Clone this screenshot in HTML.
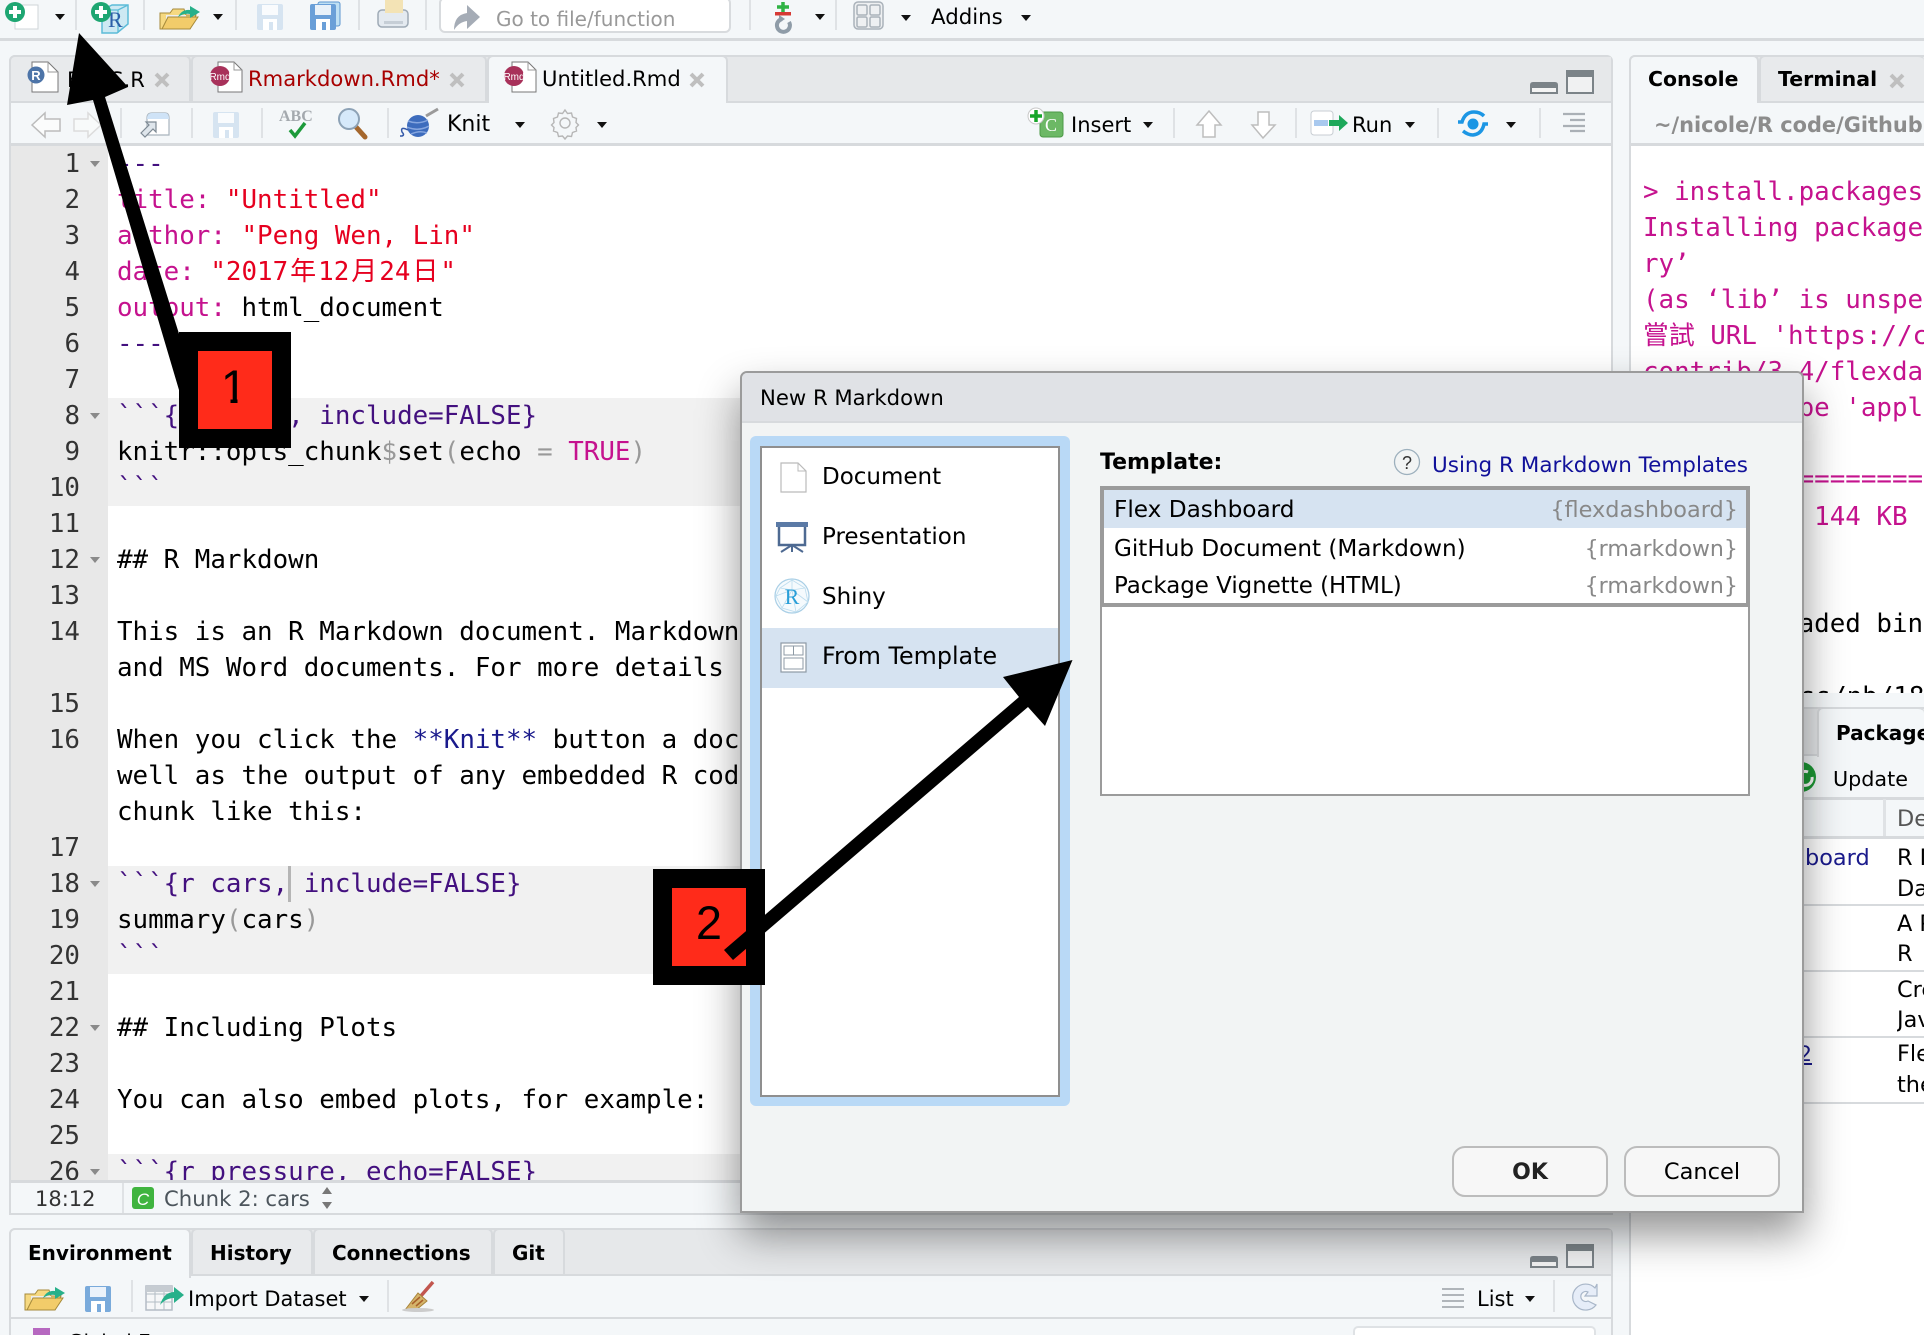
<!DOCTYPE html>
<html><head><meta charset="utf-8"><title>RStudio - New R Markdown</title>
<style>
html,body{margin:0;padding:0;width:1924px;height:1335px;overflow:hidden;background:#f4f7f9}
body{position:relative;font-family:"DejaVu Sans","Liberation Sans",sans-serif;font-size:21.3px;color:#000}
.a{position:absolute}
.t{position:absolute;white-space:pre;line-height:36px;margin-top:-17px}
.b{font-weight:bold;font-size:20px}
.m{font-family:"DejaVu Sans Mono","Liberation Mono","Noto Sans CJK TC",monospace;font-size:25.85px}
.n{color:#333;text-align:right;width:60px;left:20px}
.k{color:#c5128e}.s{color:#e6001f}.p{color:#43107f}.g{color:#999}.v{color:#1a1a8c}
.c{display:inline-block;width:30px;height:30px;line-height:30px;text-align:center;font-style:normal;font-family:"Noto Sans CJK TC",sans-serif;font-size:26px}
.tab{position:absolute;background:#e8eaec;border:2px solid #d7dadd;border-bottom:0;border-radius:6px 6px 0 0;box-sizing:border-box}
.on{background:#f4f7f9}
.bar{position:absolute;height:2px;background:#d7dadd}
.sep{position:absolute;width:2px;background:#dfe2e5}
.w{width:281px;overflow:hidden;height:40px;line-height:36px;margin-top:-17px}
.z{width:27px;overflow:hidden}
#dlg{position:absolute;left:740px;top:371px;width:1064px;height:842px;box-sizing:border-box;background:#f2f4f4;border:2px solid #9b9b9b;border-radius:7px 7px 0 0;box-shadow:0 22px 42px rgba(0,0,0,.42);z-index:5}
#ov{position:absolute;left:0;top:0;z-index:6}
</style></head><body>

<!-- main toolbar -->
<div class="bar" style="left:0;top:38px;width:1924px;height:3px"></div>
<div class="a" style="left:439px;top:-3px;width:292px;height:36px;box-sizing:border-box;background:#fff;border:2px solid #d8dbde;border-radius:6px"></div>
<div class="sep" style="left:75px;top:0;height:30px"></div><div class="sep" style="left:143px;top:0;height:30px"></div><div class="sep" style="left:235px;top:0;height:30px"></div><div class="sep" style="left:358px;top:0;height:30px"></div><div class="sep" style="left:425px;top:0;height:30px"></div><div class="sep" style="left:749px;top:0;height:30px"></div><div class="sep" style="left:835px;top:0;height:30px"></div>
<div class="t" style="left:496px;top:18px;color:#999;font-size:20px">Go to file/function</div>
<div class="t" style="left:931px;top:17px">Addins</div>

<!-- editor pane -->
<div class="a" style="left:9px;top:55px;width:1604px;height:1160px;box-sizing:border-box;border:2px solid #d7dadd;border-radius:6px 6px 0 0;background:#fff"></div>
<div class="a" style="left:11px;top:57px;width:1600px;height:45px;background:#e6e8ea"></div>
<div class="tab" style="left:9px;top:55px;width:182px;height:47px"></div>
<div class="tab" style="left:191px;top:55px;width:296px;height:47px"></div>
<div class="tab on" style="left:487px;top:55px;width:241px;height:50px"></div>
<div class="bar" style="left:9px;top:101px;width:478px"></div><div class="bar" style="left:727px;top:101px;width:886px"></div>
<div class="t" style="left:67px;top:79px;font-size:21px">FILES.R</div>
<div class="t" style="left:248px;top:78px;color:#a80000;font-size:21.1px">Rmarkdown.Rmd*</div>
<div class="t" style="left:542px;top:78px;font-size:21.1px">Untitled.Rmd</div>
<div class="a" style="left:11px;top:103px;width:1600px;height:41px;background:#f4f7f9"></div>
<div class="bar" style="left:9px;top:143px;width:1604px;height:3px"></div>
<div class="sep" style="left:120px;top:108px;height:30px"></div><div class="sep" style="left:191px;top:108px;height:30px"></div><div class="sep" style="left:261px;top:108px;height:30px"></div><div class="sep" style="left:387px;top:108px;height:30px"></div><div class="sep" style="left:1173px;top:108px;height:30px"></div><div class="sep" style="left:1295px;top:108px;height:30px"></div><div class="sep" style="left:1437px;top:108px;height:30px"></div><div class="sep" style="left:1539px;top:108px;height:30px"></div>
<div class="t" style="left:447px;top:124px;font-size:22px">Knit</div>
<div class="t" style="left:1071px;top:124px;font-size:21px">Insert</div>
<div class="t" style="left:1352px;top:124px;font-size:21px">Run</div>

<!-- editor body -->
<div class="a" style="left:11px;top:146px;width:1600px;height:1035px;overflow:hidden;background:#fff">
 <div class="a" style="left:0;top:-146px;width:1600px;height:1335px">
  <div class="a" style="left:0;top:146px;width:97px;height:1040px;background:#e8e8e8"></div>
  <div class="a" style="left:97px;top:398px;width:1503px;height:108px;background:#f1f1f1"></div>
  <div class="a" style="left:97px;top:866px;width:1503px;height:108px;background:#f1f1f1"></div>
  <div class="a" style="left:97px;top:1154px;width:1503px;height:40px;background:#f1f1f1"></div>
  <div class="a" style="left:277px;top:866px;width:3px;height:36px;background:#b5b5b5"></div>
  <div class="t m n" style="left:9px;top:163px">1</div><div class="t m n" style="left:9px;top:199px">2</div><div class="t m n" style="left:9px;top:235px">3</div><div class="t m n" style="left:9px;top:271px">4</div><div class="t m n" style="left:9px;top:307px">5</div><div class="t m n" style="left:9px;top:343px">6</div><div class="t m n" style="left:9px;top:379px">7</div><div class="t m n" style="left:9px;top:415px">8</div><div class="t m n" style="left:9px;top:451px">9</div><div class="t m n" style="left:9px;top:487px">10</div><div class="t m n" style="left:9px;top:523px">11</div><div class="t m n" style="left:9px;top:559px">12</div><div class="t m n" style="left:9px;top:595px">13</div><div class="t m n" style="left:9px;top:631px">14</div><div class="t m n" style="left:9px;top:703px">15</div><div class="t m n" style="left:9px;top:739px">16</div><div class="t m n" style="left:9px;top:847px">17</div><div class="t m n" style="left:9px;top:883px">18</div><div class="t m n" style="left:9px;top:919px">19</div><div class="t m n" style="left:9px;top:955px">20</div><div class="t m n" style="left:9px;top:991px">21</div><div class="t m n" style="left:9px;top:1027px">22</div><div class="t m n" style="left:9px;top:1063px">23</div><div class="t m n" style="left:9px;top:1099px">24</div><div class="t m n" style="left:9px;top:1135px">25</div><div class="t m n" style="left:9px;top:1171px">26</div>
  <svg class="a" style="left:0;top:0" width="110" height="1335"><g fill="#8a8a8a"><path d="M79 161h10l-5 6z"/><path d="M79 413h10l-5 6z"/><path d="M79 557h10l-5 6z"/><path d="M79 881h10l-5 6z"/><path d="M79 1025h10l-5 6z"/><path d="M79 1169h10l-5 6z"/></g></svg>
  <div class="t m p" style="left:106px;top:163px">---</div>
  <div class="t m" style="left:106px;top:199px"><span class="k">title:</span> <span class="s">"Untitled"</span></div>
  <div class="t m" style="left:106px;top:235px"><span class="k">author:</span> <span class="s">"Peng Wen, Lin"</span></div>
  <div class="t m" style="left:106px;top:271px"><span class="k">date:</span> <span class="s">"2017<i class="c">年</i>12<i class="c">月</i>24<i class="c">日</i>"</span></div>
  <div class="t m" style="left:106px;top:307px"><span class="k">output:</span> html_document</div>
  <div class="t m p" style="left:106px;top:343px">---</div>
  <div class="t m p" style="left:106px;top:415px">&#96;&#96;&#96;{r setup, include=FALSE}</div>
  <div class="t m" style="left:106px;top:451px">knitr::opts_chunk<span class="g">$</span>set<span class="g">(</span>echo <span class="g">=</span> <span class="k">TRUE</span><span class="g">)</span></div>
  <div class="t m p" style="left:106px;top:487px">&#96;&#96;&#96;</div>
  <div class="t m" style="left:106px;top:559px">## R Markdown</div>
  <div class="t m" style="left:106px;top:631px">This is an R Markdown document. Markdown is a simple formatting syntax for authoring HTML, PDF,</div>
  <div class="t m" style="left:106px;top:667px">and MS Word documents. For more details on using R Markdown see the documentation online.</div>
  <div class="t m" style="left:106px;top:739px">When you click the <span class="v">**Knit**</span> button a document will be generated that includes both</div>
  <div class="t m" style="left:106px;top:775px">well as the output of any embedded R code chunks within the document. You can embed an R code</div>
  <div class="t m" style="left:106px;top:811px">chunk like this:</div>
  <div class="t m p" style="left:106px;top:883px">&#96;&#96;&#96;{r cars, include=FALSE}</div>
  <div class="t m" style="left:106px;top:919px">summary<span class="g">(</span>cars<span class="g">)</span></div>
  <div class="t m p" style="left:106px;top:955px">&#96;&#96;&#96;</div>
  <div class="t m" style="left:106px;top:1027px">## Including Plots</div>
  <div class="t m" style="left:106px;top:1099px">You can also embed plots, for example:</div>
  <div class="t m p" style="left:106px;top:1171px">&#96;&#96;&#96;{r pressure, echo=FALSE}</div>
 </div>
</div>

<!-- status bar -->
<div class="bar" style="left:9px;top:1180px;width:1604px;height:3px"></div>
<div class="a" style="left:11px;top:1183px;width:1600px;height:30px;background:#f4f7f9"></div>
<div class="sep" style="left:122px;top:1183px;height:30px"></div>
<div class="t" style="left:35px;top:1198px;color:#333;font-size:21px">18:12</div>
<div class="t" style="left:164px;top:1198px;color:#4c555c;font-size:21.2px">Chunk 2: cars</div>

<!-- environment pane -->
<div class="a" style="left:9px;top:1228px;width:1604px;height:107px;box-sizing:border-box;border:2px solid #d7dadd;border-bottom:0;border-radius:6px 6px 0 0;background:#f4f7f9"></div>
<div class="a" style="left:11px;top:1230px;width:1600px;height:44px;background:#e6e8ea"></div>
<div class="tab on" style="left:9px;top:1228px;width:182px;height:50px"></div>
<div class="tab" style="left:191px;top:1228px;width:122px;height:47px"></div>
<div class="tab" style="left:313px;top:1228px;width:180px;height:47px"></div>
<div class="tab" style="left:493px;top:1228px;width:72px;height:47px"></div>
<div class="bar" style="left:190px;top:1274px;width:1423px"></div>
<div class="t b" style="left:28px;top:1252px">Environment</div>
<div class="t b" style="left:210px;top:1252px">History</div>
<div class="t b" style="left:332px;top:1252px">Connections</div>
<div class="t b" style="left:512px;top:1252px">Git</div>
<div class="bar" style="left:9px;top:1317px;width:1604px"></div>
<div class="sep" style="left:131px;top:1280px;height:32px"></div><div class="sep" style="left:387px;top:1280px;height:32px"></div><div class="sep" style="left:1553px;top:1280px;height:32px"></div>
<div class="t" style="left:188px;top:1298px;font-size:21px">Import Dataset</div>
<div class="t" style="left:1477px;top:1298px;font-size:21px">List</div>
<div class="a" style="left:1353px;top:1326px;width:243px;height:9px;box-sizing:border-box;background:#fff;border:2px solid #dfe2e5;border-bottom:0;border-radius:5px 5px 0 0"></div>
<div class="a" style="left:68px;top:1330px;height:5px;width:120px;overflow:hidden;font-size:20px;line-height:24px;white-space:pre">Global Env</div>

<!-- right column -->
<div class="a" style="left:1629px;top:55px;width:295px;height:1280px;box-sizing:border-box;border:2px solid #d7dadd;border-right:0;border-bottom:0;border-radius:6px 0 0 0;background:#fff"></div>
<div class="a" style="left:1631px;top:57px;width:293px;height:45px;background:#e6e8ea"></div>
<div class="tab on" style="left:1629px;top:55px;width:130px;height:50px"></div>
<div class="tab" style="left:1759px;top:55px;width:165px;height:47px;border-right:0"></div>
<div class="bar" style="left:1758px;top:101px;width:166px"></div>
<div class="a" style="left:1631px;top:103px;width:293px;height:41px;background:#f4f7f9"></div>
<div class="bar" style="left:1629px;top:143px;width:295px;height:3px"></div>
<div class="t b" style="left:1648px;top:78px;font-size:20.4px">Console</div>
<div class="t b" style="left:1778px;top:78px;font-size:20.5px">Terminal</div>
<div class="t" style="left:1654px;top:124px;color:#8c8c8c;font-weight:bold;font-size:20.9px">~/nicole/R code/Github</div>
<div class="a" style="left:1631px;top:146px;width:293px;height:547px;overflow:hidden;background:#fff">
 <div class="a" style="left:0;top:-147px;width:293px;height:900px">
  <div class="t m k w" style="left:12px;top:192px">&gt; install.packages("flexdashboard")</div>
  <div class="t m k w" style="left:12px;top:228px">Installing package into ‘/Library/Frameworks/R.framework</div>
  <div class="t m k w" style="left:12px;top:264px">ry’</div>
  <div class="t m k w" style="left:12px;top:300px">(as ‘lib’ is unspecified)</div>
  <div class="t m k w" style="left:12px;top:336px">嘗試 URL 'https://cran.rstudio.com/bin/macosx/el-capitan/</div>
  <div class="t m k w" style="left:12px;top:372px">contrib/3.4/flexdashboard_0.5.tgz'</div>
  <div class="t m k w" style="left:12px;top:408px">Content type 'application/x-gzip' length 147610 bytes</div>
  <div class="t m k w" style="left:12px;top:479px">==================================================</div>
  <div class="t m k w" style="left:12px;top:517px">downloaded 144 KB</div>
  <div class="t m w" style="left:12px;top:624px">The downloaded binary packages are in</div>
  <div class="t m" style="left:169px;top:697px;width:124px;overflow:hidden">ss/nb/18</div>
 </div>
</div>
<!-- packages pane -->
<div class="a" style="left:1631px;top:693px;width:293px;height:420px;background:#f4f7f9"></div>
<div class="bar" style="left:1631px;top:707px;width:293px"></div>
<div class="a" style="left:1631px;top:709px;width:293px;height:46px;background:#e6e8ea"></div>
<div class="tab on" style="left:1817px;top:707px;width:107px;height:50px;border-right:0"></div>
<div class="bar" style="left:1631px;top:754px;width:186px"></div>
<div class="t b" style="left:1836px;top:732px;width:88px;overflow:hidden">Packages</div>
<div class="t" style="left:1833px;top:778px;font-size:20.7px">Update</div>
<div class="bar" style="left:1631px;top:797px;width:293px;height:3px"></div>
<div class="sep" style="left:1883px;top:799px;height:38px;width:3px"></div>
<div class="t z" style="left:1897px;top:818px;color:#555;font-size:22.4px">Description</div>
<div class="bar" style="left:1631px;top:836px;width:293px;height:3px"></div>
<div class="a" style="left:1631px;top:839px;width:293px;height:496px;background:#fff"></div>
<div class="bar" style="left:1631px;top:904px;width:293px"></div><div class="bar" style="left:1631px;top:970px;width:293px"></div><div class="bar" style="left:1631px;top:1036px;width:293px"></div><div class="bar" style="left:1631px;top:1102px;width:293px"></div>
<div class="t v" style="left:1805px;top:857px;font-size:22.4px;z-index:1">board</div>
<div class="t v" style="left:1790px;top:1053px;font-size:21px;text-decoration:underline">r2</div>
<div class="t z" style="left:1897px;top:857px;font-size:22.4px">R Markdown</div>
<div class="t z" style="left:1897px;top:888px;font-size:22.4px">Dashboards</div>
<div class="t z" style="left:1897px;top:923px;font-size:22.4px">A Package</div>
<div class="t z" style="left:1897px;top:953px;font-size:22.4px">R</div>
<div class="t z" style="left:1897px;top:989px;font-size:22.4px">Create</div>
<div class="t z" style="left:1897px;top:1019px;font-size:22.4px">JavaScript</div>
<div class="t z" style="left:1897px;top:1053px;font-size:22.4px">Flexible</div>
<div class="t z" style="left:1897px;top:1084px;font-size:22.4px">the</div>

<!-- base icons -->
<svg class="a" style="left:0;top:0;pointer-events:none" width="1924" height="1335" viewBox="0 0 1924 1335">
 <defs>
  <path id="tri" d="M-5-3H5L0 3z" fill="#111"/>
  <g id="x"><path d="M-6-6 6 6M6-6-6 6" stroke="#bfbfbf" stroke-width="4"/></g>
  <g id="rmdp"><path d="M-2-14H14L22-6V16H-2z" fill="#fff" stroke="#777" stroke-width="1"/><path d="M14-14V-6H22" fill="none" stroke="#999"/><circle cx="0" cy="0" r="10" fill="#a8315a"/><text x="0" y="4" text-anchor="middle" font-size="10" font-family="Liberation Sans" fill="#fff">Rmd</text></g>
  <g id="save"><rect x="0" y="0" width="26" height="26" rx="2"/><rect x="5" y="1" width="16" height="10" fill="#fff" opacity=".85"/><rect x="6" y="15" width="14" height="11" fill="#fff"/><rect x="12" y="18" width="4" height="8"/></g>
  <g id="min"><path d="M0 12V3q0-3 3-3H25q3 0 3 3V12z" fill="#7b8388"/><rect x="2" y="6" width="24" height="4" fill="#f4f4f4"/></g>
  <g id="max"><rect x="1" y="1" width="26" height="22" fill="#f0f1f2" stroke="#7b8388" stroke-width="2"/><path d="M0 7V3q0-3 3-3H25q3 0 3 3V7z" fill="#7b8388"/></g>
  <g id="fold"><path d="M0 24V8H10L13 4H24L26 10H36L30 24z" fill="#f6d981" stroke="#a68a3a"/><path d="M6 10H26V18H6z" fill="#eee"/><path d="M2 24 8 12H38L30 24z" fill="#f2cc6a" stroke="#a68a3a"/><path d="M18 12Q22 4 30 5V1L40 7 30 13V9Q24 8 18 12z" fill="#27b08a"/></g>
 </defs>
 <!-- toolbar -->
 <rect x="15" y="5" width="23" height="24" fill="#fff" stroke="#cfd4d8"/>
 <circle cx="15" cy="12" r="10" fill="#1ea672"/><path d="M15 6v12M9 12h12" stroke="#fff" stroke-width="4"/>
 <use href="#tri" x="60" y="17"/>
 <path d="M102 10 112 5H128V24L117 33H102z" fill="#cde9f3" stroke="#5dbcd8" stroke-width="1.5"/><path d="M102 10H118V33M118 10 128 5" fill="none" stroke="#5dbcd8" stroke-width="1.3"/>
 <text x="108" y="27" font-family="Liberation Serif" font-size="22" fill="#2c5fa8">R</text>
 <circle cx="101" cy="12" r="10" fill="#1ea672"/><path d="M101 6v12M95 12h12" stroke="#fff" stroke-width="4"/>
 <use href="#fold" x="160" y="5"/>
 <use href="#tri" x="218" y="17"/>
 <use href="#save" x="257" y="4" fill="#d6e4f1"/>
 <rect x="318" y="2" width="22" height="24" rx="2" fill="#bfe0f4" stroke="#5d96cf"/>
 <use href="#save" x="310" y="4" fill="#6a9fd8"/>
 <rect x="385" y="0" width="18" height="14" fill="#f3e3b5"/>
 <rect x="378" y="10" width="30" height="17" rx="4" fill="#e4eaf0" stroke="#9eaab6" stroke-width="1.5"/><rect x="385" y="0" width="18" height="13" fill="#f3e3b5"/><rect x="384" y="21" width="19" height="3" fill="#c6ced6"/>
 <path d="M454 30Q454 15 467 13V5L480 17 467 29V21Q459 22 454 30z" fill="#a5acb6"/>
 <path d="M783 2v10M777 7h12" stroke="#2fb344" stroke-width="3.5"/><rect x="775" y="12" width="16" height="3.5" fill="#d63a35"/>
 <path d="M789 22a6.5 6.5 0 1 1-7-3" fill="none" stroke="#8f9ca8" stroke-width="4"/><path d="M779 15l6 4-6 4z" fill="#8f9ca8"/>
 <use href="#tri" x="820" y="17"/>
 <rect x="854" y="2" width="29" height="27" rx="4" fill="#eef0f2" stroke="#aab2ba" stroke-width="1.5"/>
 <g fill="none" stroke="#aab2ba" stroke-width="1.5"><rect x="857" y="5" width="10" height="10" rx="1.5"/><rect x="870" y="5" width="10" height="10" rx="1.5"/><rect x="857" y="17" width="10" height="10" rx="1.5"/><rect x="870" y="17" width="10" height="10" rx="1.5"/></g>
 <use href="#tri" x="906" y="18"/><use href="#tri" x="1026" y="18"/>
 <!-- tabs -->
 <path d="M32 62H48L58 72V92H32z" fill="#fff" stroke="#777"/><path d="M48 62V72H58" fill="none" stroke="#999"/>
 <circle cx="36" cy="75" r="8.5" fill="#4d74a8"/><text x="36" y="80" text-anchor="middle" font-size="13" font-weight="bold" font-family="Liberation Sans" fill="#fff">R</text>
 <use href="#rmdp" x="220" y="76"/><use href="#rmdp" x="514" y="76"/>
 <use href="#x" x="162" y="80"/><use href="#x" x="457" y="80"/><use href="#x" x="697" y="80"/><use href="#x" x="1897" y="81"/>
 <use href="#min" x="1530" y="82"/><use href="#max" x="1566" y="70"/>
 <use href="#min" x="1530" y="1256"/><use href="#max" x="1566" y="1244"/>
 <!-- editor toolbar -->
 <path d="M32 125 45 113V119H60V131H45V137z" fill="#fbfcfc" stroke="#bcbcbc" stroke-width="1.5"/>
 <path d="M101 125 88 113V119H74V131H88V137z" fill="#f8fafa" stroke="#dcdcdc" stroke-width="1.5"/>
 <path d="M147 118Q147 113 152 113H165Q169 113 169 118V135H147z" fill="#fff" stroke="#a9b4bd" stroke-width="1.2"/><path d="M147 119Q147 113 152 113H165Q169 113 169 119z" fill="#cfe3f7"/>
 <path d="M141 133 149 125 146 122H156V132L153 129 145 137z" fill="#dfe6ec" stroke="#7e8a94" stroke-width="1.2"/>
 <use href="#save" x="213" y="112" fill="#d6e4f1"/>
 <text x="279" y="121" font-family="Liberation Serif" font-weight="bold" font-size="16" fill="#a4a9ae">ABC</text>
 <path d="M290 130 295 136 305 123" fill="none" stroke="#1c9a3a" stroke-width="3.5"/>
 <path d="M356 127 365 137" stroke="#a5672d" stroke-width="5" stroke-linecap="round"/>
 <circle cx="349" cy="119" r="10" fill="#d6e9fa" stroke="#8da2b6" stroke-width="2"/>
 <path d="M426 116 438 109" stroke="#9a9a9a" stroke-width="3"/>
 <circle cx="418" cy="126" r="11" fill="#3d6cbd"/><path d="M408 121Q418 125 428 120M407 127Q418 132 429 126M411 134Q420 130 427 133" fill="none" stroke="#86a6df" stroke-width="1.5"/>
 <path d="M408 130Q400 126 402 132 405 135 402 136H400" fill="none" stroke="#3459a8" stroke-width="1.5"/>
 <use href="#tri" x="520" y="125"/>
 <g fill="none" stroke="#b6b6b6" stroke-width="1.4"><circle cx="565" cy="123" r="5"/><path d="M565 110l2.500 3.500 4-.5 1 4 4 1.500-.5 4 2.500 2.500-2.500 2.500.5 3.500-4 1.500-1 4-4-.5-2.500 3-2.500-3-4 .5-1-4-4-1.500.5-3.500-2.500-2.500 2.500-2.500-.5-4 4-1.500 1-4 4 .5z"/></g>
 <use href="#tri" x="602" y="125"/>
 <rect x="1040" y="112" width="23" height="25" rx="3" fill="#6cb865" stroke="#4c9a46"/><text x="1051" y="131" text-anchor="middle" font-family="Liberation Serif" font-size="18" fill="#fff">C</text>
 <circle cx="1036" cy="116" r="8" fill="#fff" stroke="#c8c8c8"/><path d="M1036 110v12M1030 116h12" stroke="#17a52a" stroke-width="3.5"/>
 <use href="#tri" x="1148" y="125"/>
 <path d="M1209 111 1221 125H1215V137H1203V125H1197z" fill="#fff" stroke="#bdbdbd" stroke-width="1.5"/>
 <path d="M1263 138 1275 125H1269V112H1258V125H1252z" fill="#fff" stroke="#bdbdbd" stroke-width="1.5"/>
 <rect x="1311" y="111" width="22" height="24" rx="3" fill="#fff" stroke="#c8ced3"/><rect x="1314" y="120" width="14" height="6" fill="#a9c9ef"/>
 <path d="M1329 120H1339V115L1348 123 1339 131V126H1329z" fill="#1da85a"/>
 <use href="#tri" x="1410" y="125"/>
 <circle cx="1473" cy="124" r="5.500" fill="#1c96e4"/><path d="M1458 122H1462Q1465 112 1474 112 1480 112 1484 116M1488 124H1484Q1482 134 1473 135 1468 135 1463 131" fill="none" stroke="#1c96e4" stroke-width="3.500"/>
 <use href="#tri" x="1511" y="125"/>
 <path d="M1563 114H1585M1570 120H1585M1563 126H1585M1570 131H1585" stroke="#aab0b6" stroke-width="2.200"/>
 <!-- status -->
 <rect x="132" y="1187" width="22" height="22" rx="3" fill="#3fb43f"/><text x="143" y="1205" text-anchor="middle" font-style="italic" font-family="Liberation Sans" font-size="17" fill="#fff">C</text>
 <path d="M322 1194h10l-5-7zM322 1202h10l-5 7z" fill="#777"/>
 <!-- env toolbar -->
 <use href="#fold" x="25" y="1286"/>
 <use href="#save" x="85" y="1286" fill="#79aadb"/>
 <rect x="146" y="1286" width="26" height="24" fill="#f6f7f8" stroke="#b3bcc5" stroke-width="1.500"/><path d="M146 1294H172M146 1302H172M155 1286V1310M164 1286V1310" stroke="#b3bcc5"/><rect x="146" y="1286" width="26" height="6" fill="#c6ccd2"/>
 <path d="M160 1305Q164 1292 174 1292V1287L184 1295 174 1303V1298Q166 1298 160 1305z" fill="#27b08a"/>
 <use href="#tri" x="364" y="1299"/>
 <path d="M433 1282 420 1297" stroke="#c2564f" stroke-width="3.500"/><path d="M418 1293 427 1301 416 1310H405z" fill="#d4b36a" stroke="#a8843a"/><path d="M412 1304 420 1297M416 1306 423 1300" stroke="#a8602a" stroke-width="1.500"/><ellipse cx="418" cy="1310" rx="16" ry="2" fill="#ccc"/>
 <path d="M1442 1289H1464M1442 1295H1464M1442 1301H1464M1442 1307H1464" stroke="#b0b5ba" stroke-width="2"/>
 <use href="#tri" x="1530" y="1299"/>
 <path d="M1595 1288A13 13 0 1 0 1596 1305L1588 1301A5 5 0 1 1 1588 1292L1585 1296 1597 1296 1597 1284z" fill="#e6edf8" stroke="#a8b6c8" stroke-width="1.200"/>
 <rect x="33" y="1328" width="17" height="7" fill="#b668c0"/>
 <!-- packages -->
 <circle cx="1801" cy="777" r="15" fill="#1d9a35"/><path d="M1812 777a7 7 0 1 1-4-5" fill="none" stroke="#fff" stroke-width="3"/>
</svg>

<!-- dialog -->
<div id="dlg">
 <div class="a" style="left:0;top:0;width:1060px;height:48px;background:#e0e2e6;border-bottom:2px solid #d7dadd;border-radius:5px 5px 0 0"></div>
 <div class="t" style="left:18px;top:24px;font-size:21.2px">New R Markdown</div>
 <div class="a" style="left:8px;top:63px;width:320px;height:670px;box-sizing:border-box;background:#b9d9f6;border-radius:6px"></div>
 <div class="a" style="left:18px;top:73px;width:300px;height:651px;box-sizing:border-box;background:#fff;border:2px solid #8f8f8f"></div>
 <div class="a" style="left:20px;top:255px;width:296px;height:60px;background:#d6e3f1"></div>
 <div class="t" style="left:80px;top:103px;font-size:23px">Document</div>
 <div class="t" style="left:80px;top:163px;font-size:23px">Presentation</div>
 <div class="t" style="left:80px;top:223px;font-size:23px">Shiny</div>
 <div class="t" style="left:80px;top:282px;font-size:23.8px">From Template</div>
 <div class="t" style="left:358px;top:89px;font-weight:bold;font-size:22px">Template:</div>
 <div class="t" style="left:690px;top:92px;font-size:21.5px;color:#11119a">Using R Markdown Templates</div>
 <div class="a" style="left:358px;top:113px;width:650px;height:310px;box-sizing:border-box;background:#fff;border:2px solid #9b9b9b"></div>
 <div class="a" style="left:358px;top:113px;width:650px;height:121px;box-sizing:border-box;background:#fff;border:4px solid #9b9b9b"></div>
 <div class="a" style="left:362px;top:117px;width:642px;height:38px;background:#d6e3f1"></div>
 <div class="t" style="left:372px;top:136px;font-size:23.2px">Flex Dashboard</div>
 <div class="t" style="left:372px;top:175px;font-size:23.1px">GitHub Document (Markdown)</div>
 <div class="t" style="left:372px;top:212px;font-size:22.9px">Package Vignette (HTML)</div>
 <div class="t" style="right:64px;top:136px;font-size:22.4px;color:#888">{flexdashboard}</div>
 <div class="t" style="right:64px;top:175px;font-size:22.1px;color:#888">{rmarkdown}</div>
 <div class="t" style="right:64px;top:212px;font-size:22.1px;color:#888">{rmarkdown}</div>
 <div class="a" style="left:710px;top:773px;width:156px;height:51px;box-sizing:border-box;background:#f7f7f7;border:2px solid #bcbcbc;border-radius:13px;text-align:center;font:bold 22px/49px 'DejaVu Sans',sans-serif;color:#222">OK</div>
 <div class="a" style="left:882px;top:773px;width:156px;height:51px;box-sizing:border-box;background:#f7f7f7;border:2px solid #bcbcbc;border-radius:13px;text-align:center;font-size:22.500px;line-height:49px">Cancel</div>
 <svg class="a" style="left:-2px;top:-2px" width="1062" height="700" viewBox="741 371 1062 700">
  <path d="M782 463H799L807 471V492H782z" fill="#fff" stroke="#bbb" stroke-width="1.200"/><path d="M799 463V471H807" fill="none" stroke="#bbb"/>
  <rect x="777" y="522" width="32" height="5" fill="#5b7aa6"/><path d="M780 527V545H806V527" fill="#fff" stroke="#4e6a92" stroke-width="2.500"/><path d="M793 545V552M793 545 782 552M793 545 804 552" stroke="#4e6a92" stroke-width="2"/>
  <circle cx="793" cy="596" r="17" fill="#f5fafd" stroke="#a9cfe6" stroke-width="1.200"/>
  <path d="M781 588 793 580 806 588 809 602 797 612 783 608 777 596zM781 588 793 590 806 588M793 580V590M777 596 793 590 809 602M783 608 793 590 797 612" fill="none" stroke="#bcdcee" stroke-width=".8"/>
  <text x="793" y="604" text-anchor="middle" font-family="Liberation Serif" font-size="22" fill="#2a9fd8">R</text>
  <rect x="782" y="643" width="25" height="29" fill="#fff" stroke="#8e9aa5" stroke-width="1.200"/>
  <path d="M785 646H804V655H785zM794.500 646V655M785 658H804V669H785z" fill="none" stroke="#8e9aa5"/>
  <ellipse cx="1408" cy="462" rx="12.500" ry="12.500" fill="#f2f4f4" stroke="#9db0bd" stroke-width="1.300"/>
  <text x="1408" y="469" text-anchor="middle" font-family="Liberation Sans" font-size="18" fill="#333">?</text>
 </svg>
</div>

<!-- annotations -->
<svg id="ov" width="1924" height="1335" viewBox="0 0 1924 1335">
 <path d="M79 33 128 87 105 97 195 385 179 390 93 100 67 105z" fill="#000"/>
 <rect x="179" y="332" width="112" height="116" fill="#000"/>
 <rect x="198" y="351" width="74" height="78" fill="#ff2b1a"/>
 <text x="234" y="403" text-anchor="middle" font-family="Liberation Sans" font-size="47" fill="#000">1</text>
 <path d="M223 399H230.500V405H223zM237.500 399H247V405H237.500z" fill="#ff2b1a"/>
 <rect x="653" y="869" width="112" height="116" fill="#000"/>
 <rect x="672" y="888" width="74" height="78" fill="#ff2b1a"/>
 <text x="709" y="939" text-anchor="middle" font-family="Liberation Sans" font-size="47" fill="#000">2</text>
 <path d="M724 950 733 960 1028 707 1045 726 1072.500 660 1003 677 1019 697z" fill="#000"/>
</svg>
</body></html>
